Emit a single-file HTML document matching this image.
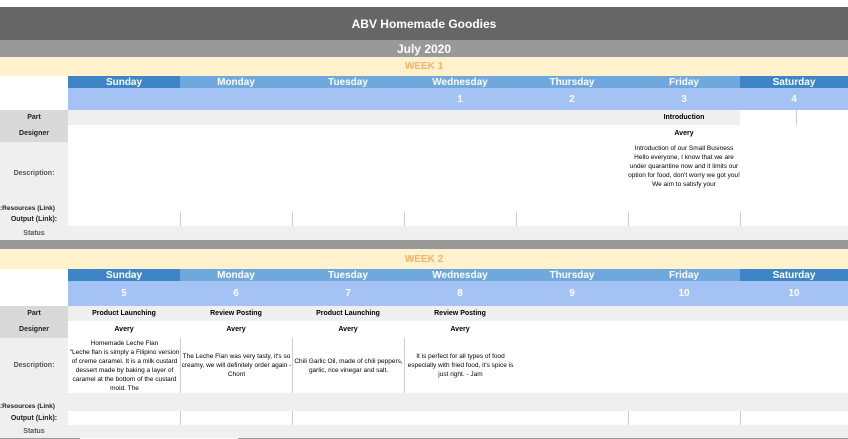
<!DOCTYPE html>
<html><head><meta charset="utf-8"><style>
*{margin:0;padding:0;box-sizing:border-box}
body{width:848px;height:439px;position:relative;overflow:hidden;background:#fff;font-family:"Liberation Sans",sans-serif}
div{position:absolute}
.c{display:flex;align-items:center;justify-content:center;text-align:center}
.dh{color:#fff;font-weight:bold;font-size:10px;height:12px}
.dt{color:#fff;font-weight:bold;font-size:10px}
.lb{font-size:7px;font-weight:bold;color:#222;width:68px;left:0}
.sm{font-size:7px;font-weight:bold;color:#000}
.tx{font-size:6.5px;color:#000;line-height:9px}
.vl{width:1px;background:#ccc}
</style></head><body>
<div class="c" style="left:0;top:7px;width:848px;height:33px;background:#666;color:#fff;font-weight:bold;font-size:12px">ABV Homemade Goodies</div>
<div class="c" style="left:0;top:40px;width:848px;height:17px;background:#999;color:#fff;font-weight:bold;font-size:12px">July 2020</div>

<!-- WEEK 1 -->
<div class="c" style="left:0;top:57px;width:848px;height:19px;background:#fff2cc;color:#f6b26b;font-weight:bold;font-size:10px">WEEK 1</div>
<div class="c dh" style="left:68px;top:76px;width:112px;background:#3d85c6">Sunday</div>
<div class="c dh" style="left:180px;top:76px;width:112px;background:#6fa8dc">Monday</div>
<div class="c dh" style="left:292px;top:76px;width:112px;background:#6fa8dc">Tuesday</div>
<div class="c dh" style="left:404px;top:76px;width:112px;background:#6fa8dc">Wednesday</div>
<div class="c dh" style="left:516px;top:76px;width:112px;background:#6fa8dc">Thursday</div>
<div class="c dh" style="left:628px;top:76px;width:112px;background:#6fa8dc">Friday</div>
<div class="c dh" style="left:740px;top:76px;width:108px;background:#3d85c6">Saturday</div>
<div style="left:68px;top:88px;width:780px;height:22px;background:#a4c2f4"></div>
<div class="c dt" style="left:404px;top:88px;width:112px;height:22px">1</div>
<div class="c dt" style="left:516px;top:88px;width:112px;height:22px">2</div>
<div class="c dt" style="left:628px;top:88px;width:112px;height:22px">3</div>
<div class="c dt" style="left:740px;top:88px;width:108px;height:22px">4</div>
<div style="left:68px;top:110px;width:672px;height:15px;background:#efefef"></div>
<div class="vl" style="left:796px;top:110px;height:15px"></div>
<div class="c lb" style="top:110px;height:15px;background:#d9d9d9">Part</div>
<div class="c lb" style="top:125px;height:17px;background:#d9d9d9">Designer</div>
<div class="c sm" style="left:628px;top:110px;width:112px;height:15px">Introduction</div>
<div class="c sm" style="left:628px;top:125px;width:112px;height:17px">Avery</div>
<div class="c lb" style="top:142px;height:63px;background:#efefef;color:#555">Description:</div>
<div class="tx" style="left:628px;top:144px;width:112px;text-align:center;height:56px;overflow:hidden">Introduction of our Small Business<br>Hello everyone, I know that we are under quarantine now and it limits our option for food, don't worry we got you! We aim to satisfy your</div>
<div class="lb" style="top:205px;height:7px;background:#efefef;font-size:6.5px;white-space:nowrap;overflow:hidden;direction:rtl;text-align:left;line-height:7px">Resources (Link):</div>
<div class="c lb" style="top:212px;height:14px;background:#efefef">Output (Link):</div>
<div class="vl" style="left:180px;top:212px;height:14px"></div>
<div class="vl" style="left:292px;top:212px;height:14px"></div>
<div class="vl" style="left:404px;top:212px;height:14px"></div>
<div class="vl" style="left:516px;top:212px;height:14px"></div>
<div class="vl" style="left:628px;top:212px;height:14px"></div>
<div class="vl" style="left:740px;top:212px;height:14px"></div>
<div style="left:0;top:226px;width:848px;height:14px;background:#efefef"></div>
<div class="c lb" style="top:226px;height:14px;color:#555">Status</div>
<div style="left:0;top:240px;width:848px;height:9px;background:#999"></div>

<!-- WEEK 2 -->
<div class="c" style="left:0;top:249px;width:848px;height:20px;background:#fff2cc;color:#f6b26b;font-weight:bold;font-size:10px">WEEK 2</div>
<div class="c dh" style="left:68px;top:269px;width:112px;background:#3d85c6">Sunday</div>
<div class="c dh" style="left:180px;top:269px;width:112px;background:#6fa8dc">Monday</div>
<div class="c dh" style="left:292px;top:269px;width:112px;background:#6fa8dc">Tuesday</div>
<div class="c dh" style="left:404px;top:269px;width:112px;background:#6fa8dc">Wednesday</div>
<div class="c dh" style="left:516px;top:269px;width:112px;background:#6fa8dc">Thursday</div>
<div class="c dh" style="left:628px;top:269px;width:112px;background:#6fa8dc">Friday</div>
<div class="c dh" style="left:740px;top:269px;width:108px;background:#3d85c6">Saturday</div>
<div style="left:68px;top:281px;width:780px;height:25px;background:#a4c2f4"></div>
<div class="c dt" style="left:68px;top:281px;width:112px;height:25px">5</div>
<div class="c dt" style="left:180px;top:281px;width:112px;height:25px">6</div>
<div class="c dt" style="left:292px;top:281px;width:112px;height:25px">7</div>
<div class="c dt" style="left:404px;top:281px;width:112px;height:25px">8</div>
<div class="c dt" style="left:516px;top:281px;width:112px;height:25px">9</div>
<div class="c dt" style="left:628px;top:281px;width:112px;height:25px">10</div>
<div class="c dt" style="left:740px;top:281px;width:108px;height:25px">10</div>
<div style="left:68px;top:306px;width:780px;height:15px;background:#efefef"></div>
<div class="c lb" style="top:306px;height:15px;background:#d9d9d9">Part</div>
<div class="c lb" style="top:321px;height:17px;background:#d9d9d9">Designer</div>
<div class="c sm" style="left:68px;top:306px;width:112px;height:15px">Product Launching</div>
<div class="c sm" style="left:180px;top:306px;width:112px;height:15px">Review Posting</div>
<div class="c sm" style="left:292px;top:306px;width:112px;height:15px">Product Launching</div>
<div class="c sm" style="left:404px;top:306px;width:112px;height:15px">Review Posting</div>
<div class="c sm" style="left:68px;top:321px;width:112px;height:17px">Avery</div>
<div class="c sm" style="left:180px;top:321px;width:112px;height:17px">Avery</div>
<div class="c sm" style="left:292px;top:321px;width:112px;height:17px">Avery</div>
<div class="c sm" style="left:404px;top:321px;width:112px;height:17px">Avery</div>
<div class="c lb" style="top:338px;height:55px;background:#efefef;color:#555">Description:</div>
<div class="vl" style="left:180px;top:338px;height:55px"></div>
<div class="vl" style="left:292px;top:338px;height:55px"></div>
<div class="vl" style="left:404px;top:338px;height:55px"></div>
<div class="tx" style="left:69px;top:339px;width:111px;text-align:center;height:54px;overflow:hidden">Homemade Leche Flan<br>"Leche flan is simply a Filipino version of creme caramel. It is a milk custard dessert made by baking a layer of caramel at the bottom of the custard mold. The</div>
<div class="c tx" style="left:181px;top:338px;width:111px;height:55px">The Leche Flan was very tasty, it's so creamy, we will definitely order again - Chont</div>
<div class="c tx" style="left:293px;top:338px;width:111px;height:55px">Chili Garlic Oil, made of chili peppers, garlic, rice vinegar and salt.</div>
<div class="c tx" style="left:405px;top:338px;width:111px;height:55px">It is perfect for all types of food especially with fried food, it's spice is just right. - Jam</div>
<div style="left:0;top:393px;width:848px;height:18px;background:#efefef"></div>
<div class="lb" style="top:393px;height:18px;font-size:6.5px;white-space:nowrap;overflow:hidden;direction:rtl;text-align:left;line-height:28px">Resources (Link):</div>
<div class="c lb" style="top:411px;height:14px;background:#efefef">Output (Link):</div>
<div class="vl" style="left:180px;top:411px;height:14px"></div>
<div class="vl" style="left:292px;top:411px;height:14px"></div>
<div class="vl" style="left:628px;top:411px;height:14px"></div>
<div class="vl" style="left:740px;top:411px;height:14px"></div>
<div style="left:0;top:425px;width:848px;height:13px;background:#efefef"></div>
<div class="c lb" style="top:425px;height:13px;color:#555">Status</div>
<div style="left:0;top:438px;width:80px;height:1px;background:#999"></div>
<div style="left:238px;top:438px;width:610px;height:1px;background:#999"></div>
</body></html>
